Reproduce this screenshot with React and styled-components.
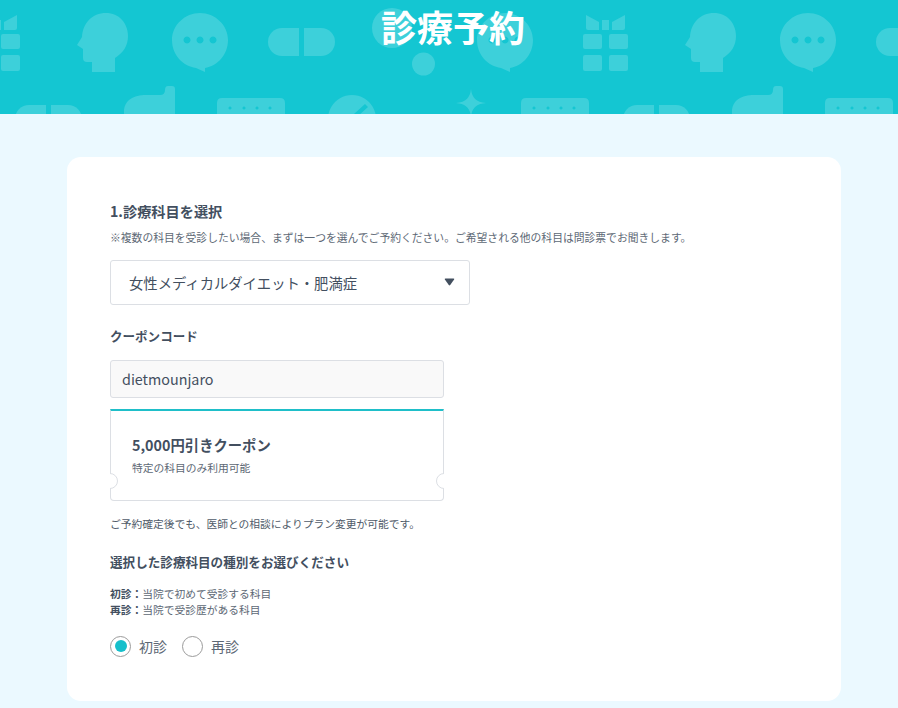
import React from "react";
import styled, { createGlobalStyle } from "styled-components";

const FONT = `"Noto Sans CJK JP", "Noto Sans", sans-serif`;

const GlobalStyle = createGlobalStyle`
  html, body {
    margin: 0;
    padding: 0;
    background: #ebf9ff;
    font-family: ${FONT};
    color: #434f5f;
  }
`;

function Gift({ x, y }) {
  return (
    <g transform={`translate(${x} ${y})`}>
      <path d="M3 0 L16 7 V15 H5 Q3 15 3 13 Z" />
      <rect x="19" y="5" width="7" height="10" />
      <path d="M42 0 L29 7 V15 H40 Q42 15 42 13 Z" />
      <rect x="0" y="19" width="19" height="15" rx="2" />
      <rect x="26" y="19" width="19" height="15" rx="2" />
      <rect x="0" y="40" width="19" height="16" rx="2" />
      <rect x="26" y="40" width="19" height="16" rx="2" />
    </g>
  );
}

function Head({ x, y }) {
  return (
    <path
      transform={`translate(${x} ${y})`}
      d="M29 0 C42 0 51 10 51 23 C51 33 46 40 38 45 V59 H15 V49 H10 Q6 49 6 45 V36 L0 32 L5 24 C6 10 15 0 29 0 Z"
    />
  );
}

function Bubble({ x, y }) {
  return (
    <g transform={`translate(${x} ${y})`}>
      <path
        fillRule="evenodd"
        d="M28 0 C43 0 56 12 56 27 C56 42 45 53 33 55 V59 L24 55 C11 53 0 42 0 27 C0 12 13 0 28 0 Z
           M15 23.500 a3.500 3.500 0 1 0 0.010 0 Z M28 23.500 a3.500 3.500 0 1 0 0.010 0 Z M41 23.500 a3.500 3.500 0 1 0 0.010 0 Z"
      />
    </g>
  );
}

function Pill({ x, y }) {
  return (
    <g transform={`translate(${x} ${y})`}>
      <path d="M14 0 H31 V28 H14 A14 14 0 0 1 14 0 Z" />
      <path d="M36 0 H53 A14 14 0 0 1 53 28 H36 Z" />
    </g>
  );
}

function Hand({ x, y }) {
  return (
    <path
      transform={`translate(${x} ${y})`}
      d="M44 0 H48 Q51 0 51 3 V40 H0 V26 C0 14 10 9 22 9 H36 Q41 9 41 4 Q41 0 44 0 Z"
    />
  );
}

function Keypad({ x, y }) {
  return (
    <g transform={`translate(${x} ${y})`}>
      <path
        fillRule="evenodd"
        d="M5 0 H63 Q68 0 68 5 V30 H0 V5 Q0 0 5 0 Z
           M13 8.500 a1.500 1.500 0 1 0 0.010 0 Z M27 8.500 a1.500 1.500 0 1 0 0.010 0 Z M40 8.500 a1.500 1.500 0 1 0 0.010 0 Z M53 8.500 a1.500 1.500 0 1 0 0.010 0 Z"
      />
    </g>
  );
}

function HeaderPattern() {
  return (
    <Pattern viewBox="0 0 898 114" aria-hidden="true">
      <Gift x={-25} y={15} />
      <Gift x={583} y={15} />
      <Head x={77} y={13} />
      <Head x={685} y={13} />
      <Bubble x={172} y={13} />
      <Bubble x={477} y={13} />
      <Bubble x={780} y={13} />
      <Pill x={268} y={28} />
      <Pill x={876} y={28} />
      <circle cx="392" cy="28" r="20" />
      <circle cx="423.500" cy="64" r="11.500" />
      <Pill x={15} y={105} />
      <Pill x={623} y={105} />
      <Hand x={124} y={86} />
      <Hand x={732} y={86} />
      <Keypad x={217} y={98} />
      <Keypad x={521} y={98} />
      <Keypad x={825} y={98} />
      <path
        fillRule="evenodd"
        d="M352 95 a24 24 0 1 0 0.010 0 Z M354 114 L365 104 L368 107 L358 116 Z"
      />
      <path d="M471 89 C472 98 476 102 486 103 C476 104 472 108 471 117 C470 108 466 104 456 103 C466 102 470 98 471 89 Z" />
    </Pattern>
  );
}

function Ticket() {
  return (
    <CouponCard>
      <CouponTitle>5,000円引きクーポン</CouponTitle>
      <CouponNote>特定の科目のみ利用可能</CouponNote>
      <Notch $side="left" />
      <Notch $side="right" />
    </CouponCard>
  );
}

export default function App() {
  return (
    <>
      <GlobalStyle />
      <Page>
        <Header>
          <HeaderPattern />
          <Title>診療予約</Title>
        </Header>
        <Card>
          <Heading>1.診療科目を選択</Heading>
          <Hint>※複数の科目を受診したい場合、まずは一つを選んでご予約ください。ご希望される他の科目は問診票でお聞きします。</Hint>
          <SelectBox>
            <span>女性メディカルダイエット・肥満症</span>
            <Caret viewBox="0 0 12 9" aria-hidden="true">
              <path d="M1.500 0.500 H10.500 Q11.800 0.500 11.200 1.700 L6.800 8 Q6 9 5.200 8 L0.800 1.700 Q0.200 0.500 1.500 0.500 Z" />
            </Caret>
          </SelectBox>
          <CouponLabel>クーポンコード</CouponLabel>
          <CodeInput>dietmounjaro</CodeInput>
          <Ticket />
          <PlanNote>ご予約確定後でも、医師との相談によりプラン変更が可能です。</PlanNote>
          <SubHeading>選択した診療科目の種別をお選びください</SubHeading>
          <Legend>
            <div><b>初診：</b>当院で初めて受診する科目</div>
            <div><b>再診：</b>当院で受診歴がある科目</div>
          </Legend>
          <RadioRow>
            <RadioItem>
              <RadioMark $checked />
              初診
            </RadioItem>
            <RadioItem>
              <RadioMark />
              再診
            </RadioItem>
          </RadioRow>
        </Card>
      </Page>
    </>
  );
}

const Page = styled.div`
  min-height: 708px;
  padding-bottom: 7px;
  box-sizing: border-box;
  overflow: hidden;
`;

const Header = styled.header`
  position: relative;
  height: 114px;
  background: #14c6d2;
  overflow: hidden;
  display: flex;
  justify-content: center;
`;

const Pattern = styled.svg`
  position: absolute;
  inset: 0;
  width: 898px;
  height: 114px;
  fill: #3dd0da;
`;

const Title = styled.h1`
  position: relative;
  margin: 0 0 0 8px;
  height: 52px;
  font-size: 36px;
  line-height: 52px;
  font-weight: 700;
  color: #fff;
`;

const Card = styled.main`
  width: 774px;
  height: 544px;
  box-sizing: border-box;
  margin: 43px 0 0 67px;
  padding: 44px 43px 0;
  background: #fff;
  border-radius: 14px;
`;

const Heading = styled.h2`
  margin: 0;
  font-size: 14.2px;
  line-height: 20px;
  font-weight: 700;
`;

const Hint = styled.p`
  margin: 8px 0 0;
  font-size: 10.8px;
  line-height: 16px;
  color: #5d6875;
  white-space: nowrap;
`;

const SelectBox = styled.div`
  width: 360px;
  height: 45px;
  box-sizing: border-box;
  margin-top: 15px;
  padding: 0 14px 0 18px;
  display: flex;
  align-items: center;
  justify-content: space-between;
  border: 1px solid #dcdfe4;
  border-radius: 3px;
  font-size: 14.33px;
`;

const Caret = styled.svg`
  width: 11px;
  height: 8px;
  margin-bottom: 2px;
  fill: #434f5f;
`;

const CouponLabel = styled.h3`
  margin: 22px 0 0;
  font-size: 12.54px;
  line-height: 18px;
  font-weight: 700;
`;

const CodeInput = styled.div`
  width: 334px;
  height: 38px;
  box-sizing: border-box;
  margin-top: 15px;
  padding: 0 11px 1px;
  display: flex;
  align-items: center;
  background: #f9f9f9;
  border: 1px solid #dcdfe4;
  border-radius: 3px;
  font-size: 14.33px;
`;

const CouponCard = styled.section`
  position: relative;
  width: 334px;
  height: 92px;
  box-sizing: border-box;
  margin-top: 11px;
  padding: 23px 21px 0;
  border: 1px solid #dcdfe4;
  border-top: 2px solid #1fbfc9;
  border-radius: 0 0 4px 4px;
`;

const CouponTitle = styled.div`
  font-size: 14.33px;
  line-height: 22px;
  font-weight: 700;
`;

const CouponNote = styled.div`
  margin-top: 4px;
  font-size: 10.75px;
  line-height: 16px;
  color: #5d6875;
`;

const Notch = styled.span`
  position: absolute;
  top: 62px;
  ${(p) => (p.$side === "left" ? "left: -9px;" : "right: -9px;")}
  width: 16px;
  height: 16px;
  box-sizing: border-box;
  background: #fff;
  border: 1px solid #dcdfe4;
  border-radius: 50%;
  clip-path: ${(p) => (p.$side === "left" ? "inset(0 0 0 8px)" : "inset(0 8px 0 0)")};
`;

const PlanNote = styled.p`
  margin: 15px 0 0;
  font-size: 10.75px;
  line-height: 16px;
  color: #505b69;
`;

const SubHeading = styled.h3`
  margin: 21px 0 0;
  font-size: 12.58px;
  line-height: 18px;
  font-weight: 700;
`;

const Legend = styled.div`
  margin-top: 15px;
  font-size: 10.75px;
  line-height: 16px;
  color: #5d6875;
  b {
    color: #434f5f;
    font-weight: 700;
  }
`;

const RadioRow = styled.div`
  margin-top: 17px;
  display: flex;
  gap: 15px;
`;

const RadioItem = styled.label`
  display: flex;
  align-items: center;
  gap: 8px;
  font-size: 14px;
  line-height: 22px;
  color: #5d6875;
`;

const RadioMark = styled.span`
  width: 21px;
  height: 21px;
  box-sizing: border-box;
  border: 1px solid #9b9b9b;
  border-radius: 50%;
  display: flex;
  align-items: center;
  justify-content: center;
  &::after {
    content: "";
    display: ${(p) => (p.$checked ? "block" : "none")};
    width: 12px;
    height: 12px;
    border-radius: 50%;
    background: #16bfcb;
  }
`;
